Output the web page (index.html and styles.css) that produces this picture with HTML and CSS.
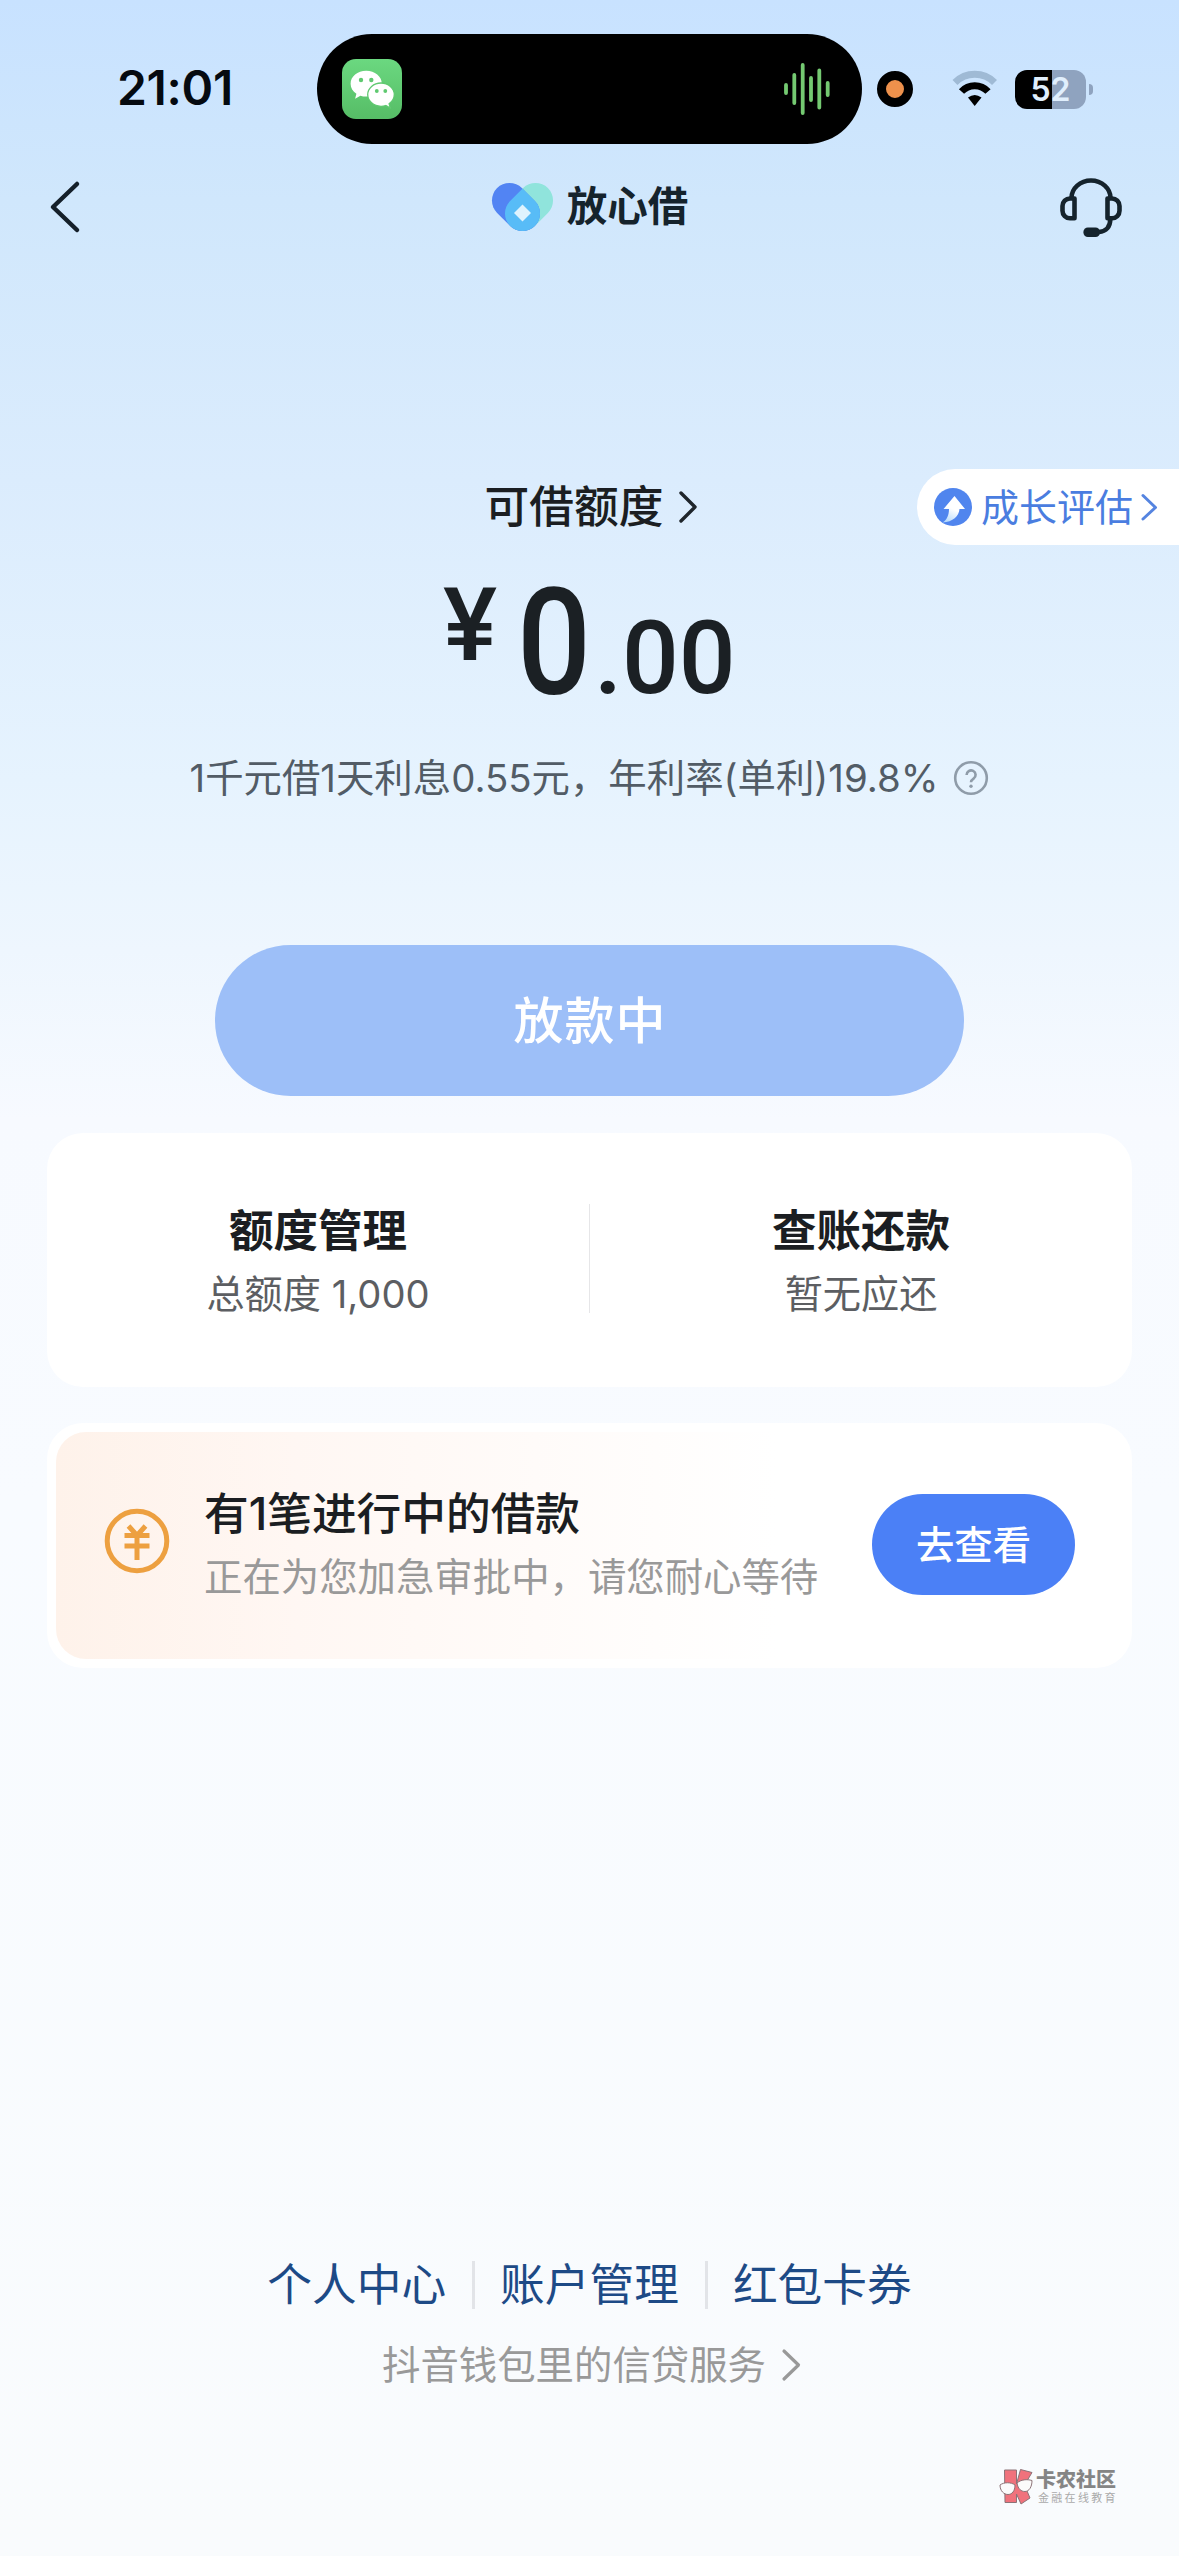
FILE: index.html
```html
<!DOCTYPE html>
<html lang="zh-CN">
<head>
<meta charset="utf-8">
<title>放心借</title>
<link rel="stylesheet" href="styles.css">
</head>
<body>
<div class="page">
  <header class="status">
    <span class="time">21:01</span>
    <div class="island">
      <svg width="60" height="60" viewBox="0 0 60 60">
        <defs><linearGradient id="wx" x1="0" y1="0" x2="0" y2="1"><stop offset="0" stop-color="#6bd880"/><stop offset="1" stop-color="#56bd66"/></linearGradient></defs>
        <rect width="60" height="60" rx="14" fill="url(#wx)"/>
        <path d="M24.2 11.8c-8.7 0-15.6 5.7-15.6 12.9 0 4.1 2.2 7.7 5.8 10l-1.3 5 5.3-3c1.8.6 3.7.9 5.8.9 8.7 0 15.6-5.700 15.600-12.900S32.900 11.800 24.200 11.800z" fill="#fff"/>
        <path d="M39 24c-7.400 0-13.300 5.200-13.300 11.600S31.600 47.300 39 47.300c1.700 0 3.300-.3 4.800-.8l4.500 2.600-1.200-4.300c3.200-2.100 5.200-5.400 5.200-9.200C52.300 29.200 46.400 24 39 24z" fill="#fff" stroke="#5fc970" stroke-width="1.300"/>
        <g fill="#5fc970"><circle cx="19" cy="21" r="2.200"/><circle cx="29.300" cy="21" r="2.200"/><circle cx="34.800" cy="32" r="1.900"/><circle cx="43.300" cy="32" r="1.900"/></g>
      </svg>
      <svg width="46" height="54" viewBox="0 0 46 54" stroke="#74c971" stroke-width="3.800" stroke-linecap="round">
        <path d="M2 23v8M10.300 13v28M18.700 3v48M27 16v22M35.300 8.500v37M43.700 21v12"/>
      </svg>
    </div>
    <span class="rec"></span>
    <svg class="wifi" width="50" height="40" viewBox="0 0 50 40" fill="none" stroke-width="7">
      <path d="M5 13.500A28 28 0 0 1 44.500 13.500" stroke="#9fbad5"/>
      <path d="M11.500 22.500A18 18 0 0 1 38 22.500" stroke="#000"/>
      <path d="M18 28.500Q24.700 23.300 31.500 28.500L24.700 37Z" fill="#000"/>
    </svg>
    <div class="battery">52</div>
    <span class="nub"></span>
  </header>

  <nav class="nav">
    <svg class="back" width="34" height="58" viewBox="0 0 34 58" fill="none" stroke="#15202a" stroke-width="4.500" stroke-linecap="round" stroke-linejoin="round"><path d="M29 6 5 29 29 52"/></svg>
    <div class="brand">
      <svg width="65" height="50" viewBox="0 0 65 50">
        <defs><clipPath id="lobe"><path d="M31.900 6.100 44.900 19.100A17.500 17.500 0 0 1 20.100 43.900L7.100 30.900A17.500 17.500 0 0 1 31.900 6.100Z"/></clipPath></defs>
        <path d="M33.100 6.100 20.100 19.100A17.500 17.500 0 0 0 44.900 43.900L57.900 30.900A17.500 17.500 0 0 0 33.100 6.100Z" fill="#90e4dc"/>
        <path d="M31.900 6.100 44.900 19.100A17.500 17.500 0 0 1 20.100 43.900L7.100 30.900A17.500 17.500 0 0 1 31.900 6.100Z" fill="#5284f3"/>
        <path clip-path="url(#lobe)" d="M33.100 6.100 20.100 19.100A17.500 17.500 0 0 0 44.900 43.900L57.900 30.900A17.500 17.500 0 0 0 33.100 6.100Z" fill="#58bcf7"/>
        <path d="M32.500 22.500 41 31 32.500 39.500 24 31Z" fill="#def3fe"/>
      </svg>
      <span class="brand-name">放心借</span>
    </div>
    <svg class="service" width="66" height="64" viewBox="0 0 66 64" fill="none" stroke="#15232c" stroke-width="4.600" stroke-linejoin="round">
      <path d="M13.500 24V23A19.500 17.500 0 0 1 52.500 23V24"/>
      <path d="M16.500 23.500V43.200H12A7.500 7.500 0 0 1 4.500 35.700V31A7.500 7.500 0 0 1 12 23.500ZM49.500 23.500V43.200H54A7.500 7.500 0 0 0 61.500 35.700V31A7.500 7.500 0 0 0 54 23.500Z"/>
      <path d="M52.300 44C52.300 52 48 56.500 41 57"/>
      <rect x="25.400" y="52.500" width="16.600" height="9.500" rx="4.500" fill="#15232c" stroke="none"/>
    </svg>
  </nav>

  <section class="quota">
    <div class="quota-label">可借额度<svg width="20" height="34" viewBox="0 0 20 34" fill="none" stroke="#1f252b" stroke-width="3.400" stroke-linecap="round" stroke-linejoin="round"><path d="M3 3 17 17 3 31"/></svg></div>
    <a class="growth">
      <svg width="38" height="38" viewBox="0 0 38 38">
        <defs><linearGradient id="ar" x1="0" y1="1" x2="0.400" y2="0"><stop offset="0" stop-color="#a9d3fb"/><stop offset=".6" stop-color="#fff"/></linearGradient></defs>
        <circle cx="19" cy="19" r="19" fill="#5085ee"/>
        <path d="M20.500 8 31 21H25.500C25 28 19 34 8.500 34.500 13 32 15 27 15 21H9.500Z" fill="url(#ar)"/>
      </svg>
      <span>成长评估</span>
      <svg width="18" height="30" viewBox="0 0 18 30" fill="none" stroke="#5584e0" stroke-width="3" stroke-linecap="round" stroke-linejoin="round"><path d="M3 3.500 15.500 15.500 3 27"/></svg>
    </a>
  </section>
  <div class="amount"><span class="yen">¥</span><span class="int">0</span><span class="dot">.</span><span class="dec">00</span></div>
  <div class="rate"><span>1千元借1天利息0.55元，年利率(单利)19.8%</span>
    <svg width="36" height="36" viewBox="0 0 36 36" fill="none" stroke="#8f9ca9" stroke-width="2.600"><circle cx="18" cy="18" r="15.800"/><path d="M13.600 15a4.500 4.500 0 1 1 7 3.600c-1.700 1.100-2.600 1.900-2.600 3.700"/><circle cx="18" cy="26.200" r="1.700" fill="#8f9ca9" stroke="none"/></svg>
  </div>
  <button class="primary">放款中</button>

  <section class="card summary">
    <div class="cell"><h2>额度管理</h2><p>总额度 1,000</p></div>
    <div class="cell"><h2>查账还款</h2><p>暂无应还</p></div>
  </section>

  <section class="card loan">
    <div class="loan-inner">
      <svg class="coin" width="66" height="68" viewBox="0 0 66 68" fill="none" stroke="#eda040" stroke-width="5"><circle cx="33" cy="34" r="29.800"/><path d="M24.500 19 33 28.500 41.500 19M20.500 28.500H45.500M20.500 39H45.500M33 28.500V53"/></svg>
      <div class="loan-text"><h3>有1笔进行中的借款</h3><p>正在为您加急审批中，请您耐心等待</p></div>
      <button class="check">去查看</button>
    </div>
  </section>

  <footer class="footer">
    <div class="links"><a>个人中心</a><a>账户管理</a><a>红包卡券</a></div>
    <div class="about">抖音钱包里的信贷服务<svg width="21" height="34" viewBox="0 0 21 34" fill="none" stroke="#999" stroke-width="3.200" stroke-linecap="round" stroke-linejoin="round"><path d="M3 3 17.500 17 3 31"/></svg></div>
  </footer>

  <div class="watermark">
    <svg width="34" height="38" viewBox="0 0 34 38" stroke="#8c7377" stroke-width="1">
      <path d="M5.500 2H17.500V16L21.500 1.500 33 4.500 25.500 17 31 30 22 36 17.500 26V34.500H6Z" fill="#f0727c"/>
      <path d="M1 17C5 14 12 14 16 17 16 23 13 26.500 9 26.500S1 23 1 17ZM18 15C22 11.500 28 11 33 12.500 33 19 30 23.500 26 23.500S19 21 18 15Z" fill="#fbfbfb"/>
    </svg>
    <div><b>卡农社区</b><small>金融在线教育</small></div>
  </div>
</div>
</body>
</html>
```
FILE: styles.css
```css
* { box-sizing: border-box; margin: 0; padding: 0; }
body {
  width: 1179px;
  font-family: "Inter", "Noto Sans CJK SC", sans-serif;
  color: #1b1e22;
}
svg { display: block; flex: none; }
button { border: 0; font: inherit; }
.page {
  display: flex;
  flex-direction: column;
  height: 2556px;
  background: linear-gradient(180deg, #c8e2ff 0, #d0e7fc 200px, #dbecfd 480px, #e6f3fe 780px, #eef6fe 950px, #f7faff 1120px, #f8fbff 1500px, #f9fbfd 2556px);
}

.status { display: flex; align-items: center; height: 178px; padding-left: 117px; }
.time { width: 200px; padding-bottom: 3px; font-size: 48px; font-weight: 600; letter-spacing: -0.3px; color: #050a10; line-height: 60px; }
.island {
  display: flex; align-items: center; justify-content: space-between;
  width: 545px; height: 110px; padding: 0 32px 0 25px;
  border-radius: 55px; background: #000;
}
.rec { width: 36px; height: 36px; margin-left: 15px; border: 9.500px solid #000; border-radius: 50%; background: #ee914c; }
.wifi { margin-left: 37px; }
.battery {
  width: 71px; height: 39px; margin-left: 15px; border-radius: 12px;
  background: linear-gradient(90deg, #000 37px, #8fa3bf 37px);
  color: #e0effd; font-size: 32px; font-weight: 600; line-height: 39px; text-align: center;
}
.nub { width: 4px; height: 11px; margin-left: 3px; border-radius: 0 4px 4px 0; background: #8fa3bf; }

.nav { display: grid; grid-template-columns: 1fr auto 1fr; align-items: center; height: 58px; margin-top: -3px; padding: 0 55px 0 48px; }
.brand { display: flex; align-items: center; gap: 12px; padding-left: 6px; }
.brand-name { font-size: 40.500px; font-weight: 700; line-height: 50px; color: #15232c; }
.service { justify-self: end; }

.quota { display: grid; grid-template-columns: 1fr auto 1fr; align-items: center; height: 76px; margin-top: 236px; }
.quota-label { grid-column: 2; display: flex; align-items: center; gap: 15px; padding-left: 4px; font-size: 44.700px; font-weight: 500; line-height: 60px; }
.growth {
  justify-self: end; display: flex; align-items: center;
  width: 262px; height: 76px; padding-left: 17px;
  border-radius: 38px 0 0 38px; background: #fff; color: #4a7de0; font-size: 38px;
}
.growth span { margin: 0 7px 0 9px; padding-bottom: 6px; }

.amount {
  display: flex; align-items: flex-start; height: 108px; margin: 42px 0 0 443px;
  font-family: "Roboto", sans-serif; font-weight: 500; color: #1b2024;
}
.yen { width: 74px; padding-top: 2px; font-size: 102px; line-height: 73px; }
.int { width: 77px; padding-top: 3px; font-size: 148px; line-height: 108px; transform: scaleX(.88); transform-origin: left; }
.dot { width: 28px; padding-top: 1px; font-size: 102px; line-height: 140px; }
.dec { padding-top: 1px; font-size: 102px; line-height: 140px; transform: scaleX(.98); transform-origin: left; }

.rate { display: flex; align-items: center; justify-content: center; gap: 15px; height: 50px; margin-top: 58px; color: #525c66; font-size: 38.400px; white-space: nowrap; }
.rate span { padding-bottom: 6px; }

.primary { width: 749px; height: 151px; margin: 142px auto 0 215px; padding: 0 0 7px 1px; border-radius: 76px; background: #9dbff8; color: #fff; font-size: 50px; font-weight: 500; letter-spacing: 1px; }

.card { width: 1085px; margin-left: 47px; border-radius: 36px; background: #fff; }
.summary { display: flex; height: 254px; margin-top: 37px; padding: 71px 0 74px; }
.cell { flex: 1; text-align: center; }
.cell + .cell { border-left: 1px solid #e6e6e8; }
.cell h2 { padding-top: 1px; font-size: 44.500px; font-weight: 600; line-height: 52px; }
.cell p { margin-top: 15px; color: #5c5e62; font-size: 38.200px; line-height: 44px; }

.loan { height: 245px; margin-top: 36px; padding: 9px; }
.loan-inner {
  display: flex; align-items: center; height: 227px; padding: 0 48px 3px;
  border-radius: 30px; background: linear-gradient(90deg, #fef2ea 0, #fff7f3 240px, #fffbf9 480px, #fff 720px);
}
.coin { margin-bottom: 7px; }
.loan-text { flex: 1; margin-left: 34px; white-space: nowrap; }
.loan-text h3 { font-size: 44.700px; font-weight: 500; line-height: 56px; }
.loan-text p { margin-top: 9px; color: #999; font-size: 38.400px; line-height: 52px; }
.check { width: 203px; height: 101px; padding-bottom: 5px; border-radius: 51px; background: #4b80f6; color: #fff; font-size: 38.400px; font-weight: 500; }

.footer { margin-top: 584px; }
.links { display: flex; justify-content: center; align-items: center; color: #1d4a86; font-size: 44.700px; line-height: 66px; }
.links a + a { display: flex; align-items: center; }
.links a + a::before { content: ""; width: 3px; height: 48px; margin: 0 25px 0 26px; background: #e2e4e8; }
.about { display: flex; align-items: center; justify-content: center; gap: 15px; margin-top: 19px; padding-left: 5px; color: #999; font-size: 38.400px; line-height: 56px; }

.watermark { display: flex; gap: 3px; margin: 75px 0 0 999px; color: #858585; }
.watermark b { display: block; font-size: 20px; font-weight: 900; line-height: 24px; }
.watermark small { display: block; font-size: 11px; line-height: 12px; letter-spacing: 2.300px; padding-left: 2px; color: #aaa; }
```
